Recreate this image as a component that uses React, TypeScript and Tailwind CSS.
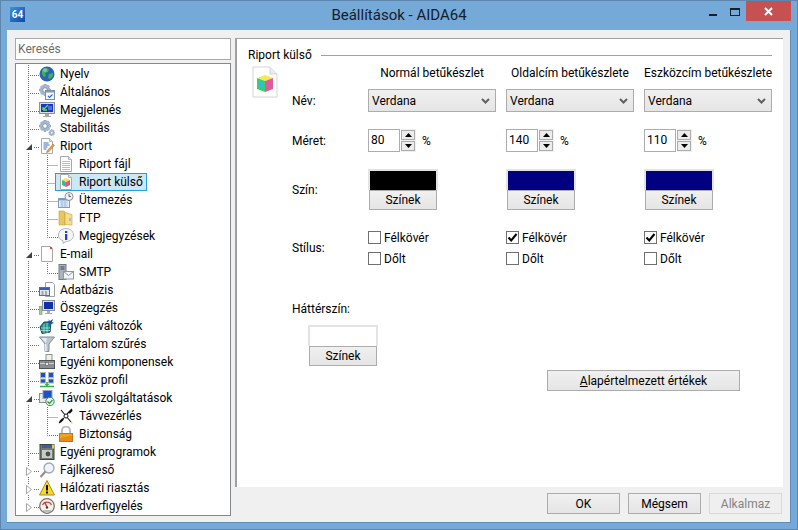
import React from "react";
import clsx from "clsx";

type TreeRow = {
  label: string;
  icon: React.ReactNode;
  level: 0 | 1;
  expander?: "open" | "closed";
  selected?: boolean;
  last?: boolean;
  end?: boolean;
};

const Svg = ({ children }: { children: React.ReactNode }) => (
  <svg width="16" height="16" viewBox="0 0 16 16" className="shrink-0">
    {children}
  </svg>
);

const Gear = ({ x = 0, y = 0 }: { x?: number; y?: number }) => (
  <g transform={`translate(${x} ${y})`}>
    <path
      d="M5 0h2l.4 1.800 1.700-.8 1.400 1.400-.8 1.700L11.500 5v2l-1.800.4.800 1.700-1.400 1.400-1.700-.8L7 11.500H5l-.4-1.800-1.700.8L1.500 9.100l.8-1.700L.5 7V5l1.800-.4-.8-1.700L2.900 1.500l1.700.8z"
      fill="#a9bccf"
      stroke="#7d94aa"
      strokeWidth=".6"
    />
    <circle cx="6" cy="6" r="2.300" fill="#fff" stroke="#6f88a0" strokeWidth=".8" />
  </g>
);

const Doc = ({ children }: { children?: React.ReactNode }) => (
  <>
    <path d="M2.500.5h8l3 3v12h-11z" fill="#fff" stroke="#a9a9a9" />
    <path d="M10.500.5v3h3" fill="#e4e4e4" stroke="#b5b5b5" />
    {children}
  </>
);

const Cube = () => (
  <>
    <path d="M4 6l4-2 4 2-4 2z" fill="#f7e04b" />
    <path d="M4 6l4 2v5l-4-2z" fill="#35c96a" />
    <path d="M8 8l4-2v5l-4 2z" fill="#e8527c" />
    <path d="M5 7l2 1v3l-2-1z" fill="#3aa5e8" />
  </>
);

const icons = {
  globe: (
    <Svg>
      <circle cx="8" cy="8" r="7.500" fill="#2c62b8" />
      <path d="M3 4l4-2 3 1-1 3-3 1 1 3-2 1-2-3zM10 8l4-1 0 3-3 3-2-1z" fill="#3fb54a" />
      <circle cx="6" cy="4" r="2" fill="#a9cdf0" opacity=".6" />
    </Svg>
  ),
  gearCheck: (
    <Svg>
      <Gear />
      <rect x="6.500" y="6.500" width="9" height="9" fill="#f4f7fa" stroke="#7d8ea0" />
      <path d="M7 7h8v1.500H7z" fill="#7d9cc0" />
      <path d="M9 12l1.500 1.500 3-3" fill="none" stroke="#2b72c8" strokeWidth="1.200" />
    </Svg>
  ),
  monitor: (
    <Svg>
      <rect x=".5" y=".5" width="15" height="11" fill="#d9dde0" stroke="#8c9298" />
      <rect x="2" y="2" width="12" height="8" fill="#1339c8" />
      <path d="M4 8l5-5M4 8h4M4 8V5" stroke="#5fe04a" strokeWidth="1.400" fill="none" />
      <path d="M9 5h4M9 7h4" stroke="#b7c7f5" strokeWidth=".8" />
      <path d="M6 12h4v2h2v1H4v-1h2z" fill="#a5a9ad" />
    </Svg>
  ),
  gears: (
    <Svg>
      <Gear x={0} y={0} />
      <g transform="translate(9.500 9.500) scale(.55)">
        <Gear />
      </g>
    </Svg>
  ),
  report: (
    <Svg>
      <Doc>
        <path d="M4.500 5h5M4.500 7h6M4.500 9h4M4.500 11h3" stroke="#3a6fb8" />
      </Doc>
      <path d="M8 13l6-7 1.500 1.500-6 6.500-2 .5z" fill="#e8a33a" stroke="#a8642a" strokeWidth=".5" />
    </Svg>
  ),
  lines: (
    <Svg>
      <Doc>
        <path d="M4 5.500h8M4 7.500h8M4 9.500h8M4 11.500h8M4 13.500h8" stroke="#b9bec4" />
      </Doc>
    </Svg>
  ),
  docCube: (
    <Svg>
      <Doc>
        <Cube />
      </Doc>
    </Svg>
  ),
  schedule: (
    <Svg>
      <rect x=".5" y="6.500" width="11" height="9" fill="#eaf1f8" stroke="#7f9cbc" />
      <path d="M1 6.500h10v2H1z" fill="#6f9bd0" />
      <path d="M2 10h8M2 12h8M2 14h8M4 9v6M7 9v6" stroke="#9ab6d4" strokeWidth=".7" />
      <circle cx="11" cy="4.500" r="4" fill="#f2f2f2" stroke="#8b8f94" />
      <path d="M11 2v2.500h2" stroke="#444" fill="none" strokeWidth=".8" />
    </Svg>
  ),
  folder: (
    <Svg>
      <path d="M1 1h5l1 1v13H1z" fill="#e9c65c" stroke="#c7a040" strokeWidth=".6" />
      <path d="M7 2.500l7 2V15l-7-.5z" fill="#f5dd8d" stroke="#c7a040" strokeWidth=".6" />
      <rect x="11.500" y="8" width="1" height="3" fill="#7aa2c8" />
    </Svg>
  ),
  info: (
    <Svg>
      <path d="M8 .5c4.200 0 7.500 2.700 7.500 6.500s-3.300 6.500-7.500 6.500L5 15.500v-2.700C2.200 11.800.5 9.700.5 7 .5 3.200 3.800.5 8 .5z" fill="#f6f6f6" stroke="#b5b5b5" />
      <rect x="7" y="3" width="2.300" height="2" fill="#2247b8" />
      <rect x="7" y="6" width="2.300" height="6" fill="#2247b8" />
    </Svg>
  ),
  email: (
    <Svg>
      <path d="M2.500.5h9l2 2v13h-11z" fill="#fff" stroke="#a8a8a8" />
      <rect x="11" y="1" width="2" height="2" fill="#e8393a" />
    </Svg>
  ),
  smtp: (
    <Svg>
      <rect x="1" y="0.500" width="7" height="15" fill="#aab4bd" stroke="#6f7a84" />
      <path d="M2.500 3h4M2.500 5h4" stroke="#3c4650" />
      <rect x="5.500" y="7.500" width="10" height="7.500" fill="#f2f4f6" stroke="#8b97a3" />
      <path d="M5.500 7.500l5 4 5-4" fill="none" stroke="#8b97a3" />
    </Svg>
  ),
  database: (
    <Svg>
      <path d="M6.500.5h7l2 2v12h-9z" fill="#fff" stroke="#9aa1a8" />
      <rect x=".5" y="5.500" width="10" height="8" fill="#dfe6ee" stroke="#5d6f84" />
      <rect x="1" y="6" width="9" height="2" fill="#3a5fa8" />
      <path d="M2.500 10h2M6 10h2M2.500 12h2M6 12h2" stroke="#5d6f84" />
    </Svg>
  ),
  summary: (
    <Svg>
      <rect x="3.500" y=".5" width="12" height="10" fill="#dde0e3" stroke="#8a9096" />
      <rect x="5" y="2" width="9" height="7" fill="#0f2fb0" />
      <path d="M8 11h3v2h2v1H6v-1h2z" fill="#a6abb0" />
      <rect x=".5" y="6.500" width="2.500" height="8" fill="#9fd08f" stroke="#7d8a7d" strokeWidth=".6" />
    </Svg>
  ),
  variables: (
    <Svg>
      <path d="M1 9l4-5h7l-1 10-8 1.500z" fill="#1f8f8a" stroke="#0e4d55" />
      <path d="M2 10h9M2 12.500h9M5 6v9M8 5v10" stroke="#bff0e6" strokeWidth=".7" />
      <path d="M9 1l2 2 3-2-1 3 2 1-3 1-1 2-1-3-2-1 2-1z" fill="#1d4fb0" />
    </Svg>
  ),
  funnel: (
    <Svg>
      <path d="M.5 1h15L10 8v7.500H6V8z" fill="#b9c6d0" stroke="#7f8d99" />
      <path d="M6 8h1.500v7.500H6zM2 2h6L7 7z" fill="#e4eaf0" />
    </Svg>
  ),
  toolbox: (
    <Svg>
      <rect x="7" y="0.500" width="6" height="6" fill="#eef1e8" stroke="#8e9488" />
      <rect x=".5" y="6.500" width="15" height="8" fill="#8b8f94" stroke="#50555a" />
      <path d="M1 9.500h14" stroke="#d0d3d6" />
      <rect x="6.500" y="8.500" width="3" height="3" fill="#e8e8e8" stroke="#50555a" strokeWidth=".6" />
    </Svg>
  ),
  profile: (
    <Svg>
      <rect x="1.500" y="0.500" width="5" height="5" fill="#1e50c8" stroke="#aeb6c0" />
      <rect x="9.500" y="0.500" width="5" height="5" fill="#1e50c8" stroke="#aeb6c0" />
      <rect x="1.500" y="7" width="5" height="4" fill="#1e50c8" stroke="#aeb6c0" />
      <rect x="9.500" y="7" width="5" height="4" fill="#1e50c8" stroke="#aeb6c0" />
      <path d="M8 10v3M1 14.500h14" stroke="#2fae4a" strokeWidth="1.600" />
      <path d="M5.500 12h5L8 14.500z" fill="#2fae4a" />
    </Svg>
  ),
  remote: (
    <Svg>
      <rect x=".5" y="3.500" width="8" height="9" fill="#e8ebee" stroke="#8a9096" />
      <rect x="4" y=".5" width="9" height="8" fill="#1e50c8" stroke="#9aa4ae" />
      <circle cx="11" cy="11.500" r="4.200" fill="#e8f5ea" stroke="#3a8a4a" />
      <path d="M8.500 11.500l2 2 3-3.500" fill="none" stroke="#2f9a4a" strokeWidth="1.300" />
    </Svg>
  ),
  satellite: (
    <Svg>
      <path d="M1 15l5-5M9 6l5-5M3 2l10 12" stroke="#111" strokeWidth="1.100" />
      <path d="M2 14l3-3M11 5l3-3" stroke="#111" strokeWidth="2.200" />
      <circle cx="8" cy="8" r="2" fill="#fff" stroke="#111" />
      <rect x="13" y="14" width="1.500" height="1.500" fill="#f2d91a" />
    </Svg>
  ),
  lock: (
    <Svg>
      <path d="M4 8V4.500a4 4 0 018 0V8" fill="none" stroke="#b9bdc1" strokeWidth="2" />
      <rect x="1.500" y="7.500" width="13" height="8" fill="#f0a21e" stroke="#c9741a" />
      <path d="M2 12.500l12-3V15H2z" fill="#e88a1a" />
    </Svg>
  ),
  programs: (
    <Svg>
      <rect x="1" y="0.500" width="14" height="15" fill="#6f7a70" stroke="#3f4640" />
      <rect x="3" y="1" width="10" height="3" fill="#3c5ea8" />
      <rect x="3" y="6" width="10" height="8" fill="#c8cbc6" />
      <circle cx="9" cy="10" r="2.400" fill="#4a4f4a" />
      <rect x="13" y="0.500" width="2" height="4" fill="#e8cf4a" />
    </Svg>
  ),
  search: (
    <Svg>
      <circle cx="10" cy="6" r="5" fill="#eef4fa" stroke="#9da8b3" strokeWidth="1.300" />
      <path d="M6.500 9.500L1.500 15" stroke="#9a8f82" strokeWidth="2.200" />
    </Svg>
  ),
  warning: (
    <Svg>
      <path d="M8 .5l7.500 14.500H.5z" fill="#f6d92a" stroke="#a98b1a" />
      <rect x="7" y="5" width="2" height="5.500" fill="#111" />
      <rect x="7" y="11.500" width="2" height="2" fill="#111" />
    </Svg>
  ),
  gauge: (
    <Svg>
      <circle cx="8" cy="8" r="7.300" fill="#f4f1ea" stroke="#76706a" strokeWidth="1.200" />
      <path d="M3.500 7a5 5 0 019 0" fill="none" stroke="#d8433a" strokeWidth="1.200" />
      <path d="M8 9L5.500 4" stroke="#c0302a" strokeWidth="1.300" />
      <circle cx="8" cy="9.500" r="1.200" fill="#444" />
      <path d="M4 13h8" stroke="#888" />
    </Svg>
  ),
};

const rows: TreeRow[] = [
  { label: "Nyelv", icon: icons.globe, level: 0 },
  { label: "Általános", icon: icons.gearCheck, level: 0 },
  { label: "Megjelenés", icon: icons.monitor, level: 0 },
  { label: "Stabilitás", icon: icons.gears, level: 0 },
  { label: "Riport", icon: icons.report, level: 0, expander: "open" },
  { label: "Riport fájl", icon: icons.lines, level: 1 },
  { label: "Riport külső", icon: icons.docCube, level: 1, selected: true },
  { label: "Ütemezés", icon: icons.schedule, level: 1 },
  { label: "FTP", icon: icons.folder, level: 1 },
  { label: "Megjegyzések", icon: icons.info, level: 1, last: true },
  { label: "E-mail", icon: icons.email, level: 0, expander: "open" },
  { label: "SMTP", icon: icons.smtp, level: 1, last: true },
  { label: "Adatbázis", icon: icons.database, level: 0 },
  { label: "Összegzés", icon: icons.summary, level: 0 },
  { label: "Egyéni változók", icon: icons.variables, level: 0 },
  { label: "Tartalom szűrés", icon: icons.funnel, level: 0 },
  { label: "Egyéni komponensek", icon: icons.toolbox, level: 0 },
  { label: "Eszköz profil", icon: icons.profile, level: 0 },
  { label: "Távoli szolgáltatások", icon: icons.remote, level: 0, expander: "open" },
  { label: "Távvezérlés", icon: icons.satellite, level: 1 },
  { label: "Biztonság", icon: icons.lock, level: 1, last: true },
  { label: "Egyéni programok", icon: icons.programs, level: 0 },
  { label: "Fájlkereső", icon: icons.search, level: 0, expander: "closed" },
  { label: "Hálózati riasztás", icon: icons.warning, level: 0, expander: "closed" },
  { label: "Hardverfigyelés", icon: icons.gauge, level: 0, expander: "closed", end: true },
];

// connector lines of one tree row, drawn as a small dotted svg
function Guides({ row }: { row: TreeRow }) {
  const child = row.level === 1;
  const dots = { stroke: "#6f6f6f", strokeDasharray: "1 1", fill: "none" };
  return (
    <svg width={child ? 42 : 23} height="18" className="shrink-0">
      {!row.end && <path d="M12.500 0V18" {...dots} />}
      {row.end && <path d="M12.500 0V4" {...dots} />}
      {child ? (
        <path d={row.last ? "M31.500 0V10.500H42" : "M31.500 0V18M31.500 10.500H42"} {...dots} />
      ) : (
        <path d="M12 10.500H23" {...dots} />
      )}
      {row.expander === "open" && (
        <>
          <rect x="9" y="5" width="8" height="10" fill="#fff" />
          <path d="M16 7v6h-6z" fill="#404040" />
        </>
      )}
      {row.expander === "closed" && (
        <>
          <rect x="9" y="5" width="8" height="11" fill="#fff" />
          <path d="M10.500 6.500l5 4-5 4z" fill="#fff" stroke="#a6a6a6" />
        </>
      )}
    </svg>
  );
}

function Tree() {
  return (
    <div className="mt-[3px] h-[453px] overflow-hidden border border-[#828790] bg-white pt-px">
      {rows.map(row => (
        <div key={row.label} className="flex h-[18px] items-center">
          <Guides row={row} />
          <div
            className={clsx(
              "flex h-[18px] items-center",
              row.selected && "-ml-[3px] border border-[#26a0da] bg-[#cbe8f6] pl-[2px] pr-[3px]"
            )}>
            {row.icon}
            <span className="ml-[5px] leading-none">{row.label}</span>
          </div>
        </div>
      ))}
    </div>
  );
}

function Button({ children, className, disabled }: { children: React.ReactNode; className?: string; disabled?: boolean }) {
  return (
    <div
      className={clsx(
        "flex items-center justify-center border",
        disabled
          ? "border-[#d9d9d9] bg-[#efefef] text-[#838383]"
          : "border-[#acacac] bg-gradient-to-b from-[#f0f0f0] to-[#e5e5e5]",
        className
      )}>
      {children}
    </div>
  );
}

function Combo() {
  return (
    <div className="flex h-[23px] w-[128px] items-center justify-between border border-[#acacac] bg-gradient-to-b from-[#f0f0f0] to-[#e5e5e5] pl-[3px] pr-[5px]">
      <span>Verdana</span>
      <svg width="9" height="6" viewBox="0 0 9 6">
        <path d="M1 1l3.500 3.500L8 1" fill="none" stroke="#606060" strokeWidth="2" />
      </svg>
    </div>
  );
}

function Spin({ value }: { value: number }) {
  return (
    <div className="flex h-[23px] w-[128px] items-center">
      <div className="flex h-[23px] w-[32px] items-center border border-[#abadb3] pb-[2px] pl-[2px]">{value}</div>
      <div className="ml-px flex h-[23px] w-[15px] flex-col justify-between bg-[#f0f0f0] py-px pr-px">
        <div className="flex h-[10px] items-center justify-center border border-[#acacac] bg-[#ececec]">
          <svg width="7" height="4"><path d="M3.500 0L7 4H0z" fill="#000" /></svg>
        </div>
        <div className="flex h-[10px] items-center justify-center border border-[#acacac] bg-[#ececec]">
          <svg width="7" height="4"><path d="M0 0h7L3.500 4z" fill="#000" /></svg>
        </div>
      </div>
      <span className="ml-[6px]">%</span>
    </div>
  );
}

function ColorPick({ color }: { color?: string }) {
  return (
    <div className="w-[70px]">
      <div className="h-[21px] border-2 border-b-0 border-[#e3e3e3]">
        <div className="h-full" style={{ backgroundColor: color }} />
      </div>
      <Button className="ml-px h-[20px] w-[68px]">Színek</Button>
    </div>
  );
}

function Check({ label, checked }: { label: string; checked?: boolean }) {
  return (
    <div className="flex h-[13px] items-center">
      <div className="flex h-[13px] w-[13px] items-center justify-center border border-[#707070] bg-white">
        {checked && (
          <svg width="11" height="11" viewBox="0 0 11 11">
            <path d="M1.500 5.500L4.200 8.500 9.500 2" fill="none" stroke="#000" strokeWidth="2" />
          </svg>
        )}
      </div>
      <span className="ml-[3px]">{label}</span>
    </div>
  );
}

const fontCols = [
  { title: "Normál betűkészlet", size: 80, color: "#000000", bold: false },
  { title: "Oldalcím betűkészlete", size: 140, color: "#000080", bold: true },
  { title: "Eszközcím betűkészlete", size: 110, color: "#000080", bold: true },
];

const fieldRow = "grid grid-cols-[66px_128px_128px_128px] gap-x-[10px]";

function Settings() {
  return (
    <div className="flex h-[449px] w-[548px] flex-col border-l-2 border-t border-[#a0a0a0] bg-white pl-[11px] pt-[8px]">
      <div className="flex h-[16px] items-center">
        <span className="shrink-0">Riport külső</span>
        <div className="ml-[9px] mr-[11px] h-px flex-1 bg-[#a0a0a0]" />
      </div>
      <div className="flex">
        <div className="w-[44px] pl-[4px] pt-[3px]">
          <svg width="26" height="32" viewBox="0 0 26 32">
            <path d="M1 1h17l7 7v23H1z" fill="#fff" stroke="#d4d4d4" />
            <path d="M18 1v7h7" fill="#ececec" stroke="#d4d4d4" />
            <path d="M5 12l8-3 8 3-8 3z" fill="#f6e94e" />
            <path d="M5 12l8 3v11l-8-3z" fill="#37d06e" />
            <path d="M13 15l8-3v11l-8 3z" fill="#e05a9a" />
            <path d="M7 15l5 2v6l-5-2z" fill="#38b6ea" />
          </svg>
        </div>
        <div className="flex flex-col pt-px">
          <div className={clsx(fieldRow, "h-[18px] items-center")}>
            <span />
            {fontCols.map(c => (
              <span key={c.title} className="whitespace-nowrap text-center">{c.title}</span>
            ))}
          </div>
          <div className={clsx(fieldRow, "mt-[7px] h-[23px] items-center")}>
            <span>Név:</span>
            {fontCols.map(c => <Combo key={c.title} />)}
          </div>
          <div className={clsx(fieldRow, "mt-[17px] h-[23px] items-center")}>
            <span>Méret:</span>
            {fontCols.map(c => <Spin key={c.title} value={c.size} />)}
          </div>
          <div className={clsx(fieldRow, "mt-[17px] h-[41px] items-center")}>
            <span>Szín:</span>
            {fontCols.map(c => <ColorPick key={c.title} color={c.color} />)}
          </div>
          <div className={clsx(fieldRow, "mt-[21px] h-[34px] items-center")}>
            <span>Stílus:</span>
            {fontCols.map(c => (
              <div key={c.title} className="flex flex-col gap-[8px]">
                <Check label="Félkövér" checked={c.bold} />
                <Check label="Dőlt" />
              </div>
            ))}
          </div>
          <div className="mt-[36px] h-[16px] leading-[16px]">Háttérszín:</div>
          <div className="ml-[16px] mt-[8px]">
            <ColorPick />
          </div>
          <Button className="ml-[255px] mt-[4px] h-[21px] w-[193px]">
            <span><u>A</u>lapértelmezett értékek</span>
          </Button>
        </div>
      </div>
    </div>
  );
}

export default function App() {
  return (
    <div
      className="flex h-[530px] w-[798px] flex-col border border-[#5c86ad] bg-[#74a9d8] text-[12px] text-black"
      style={{ fontFamily: 'Roboto, sans-serif' }}>
      <div className="grid h-[29px] grid-cols-[1fr_auto_1fr] items-start">
        <div className="pl-[9px] pt-[6px]">
          <div className="flex h-[15px] w-[15px] items-center justify-center bg-gradient-to-br from-[#3f8fe0] to-[#0c4aa6] text-[10px] font-bold leading-none text-white">
            64
          </div>
        </div>
        <div className="pt-[4px] text-[15px] leading-[20px] text-[#14202c]">Beállítások - AIDA64</div>
        <div className="flex justify-end pr-[6px]">
          <div className="flex h-[20px] w-[26px] items-end justify-center pb-[5px]">
            <div className="h-[2px] w-[8px] bg-[#14202c]" />
          </div>
          <div className="mr-[2px] flex h-[20px] w-[18px] items-center justify-center pt-px">
            <div className="h-[8px] w-[10px] border border-t-2 border-[#14202c]" />
          </div>
          <div className="flex h-[20px] w-[45px] items-center justify-center bg-[#c75050]">
            <svg width="9" height="9" viewBox="0 0 9 9">
              <path d="M1 1l7 7M8 1L1 8" stroke="#fff" strokeWidth="2" />
            </svg>
          </div>
        </div>
      </div>
      <div className="mx-[6px] flex h-[493px] w-[784px] border-b border-r border-[#5f8db8] bg-[#f0f0f0] pt-[8px]">
        <div className="ml-[8px] w-[216px]">
          <div className="flex h-[22px] items-center border border-[#a8a8a8] bg-white pl-[2px] text-[#6d6d6d]">Keresés</div>
          <Tree />
        </div>
        <div className="ml-[4px] flex flex-col">
          <Settings />
          <div className="mt-[6px] flex justify-end gap-[8px] pr-px">
            <Button className="h-[21px] w-[73px]">OK</Button>
            <Button className="h-[21px] w-[73px]">Mégsem</Button>
            <Button className="h-[21px] w-[73px]" disabled>Alkalmaz</Button>
          </div>
        </div>
      </div>
    </div>
  );
}
